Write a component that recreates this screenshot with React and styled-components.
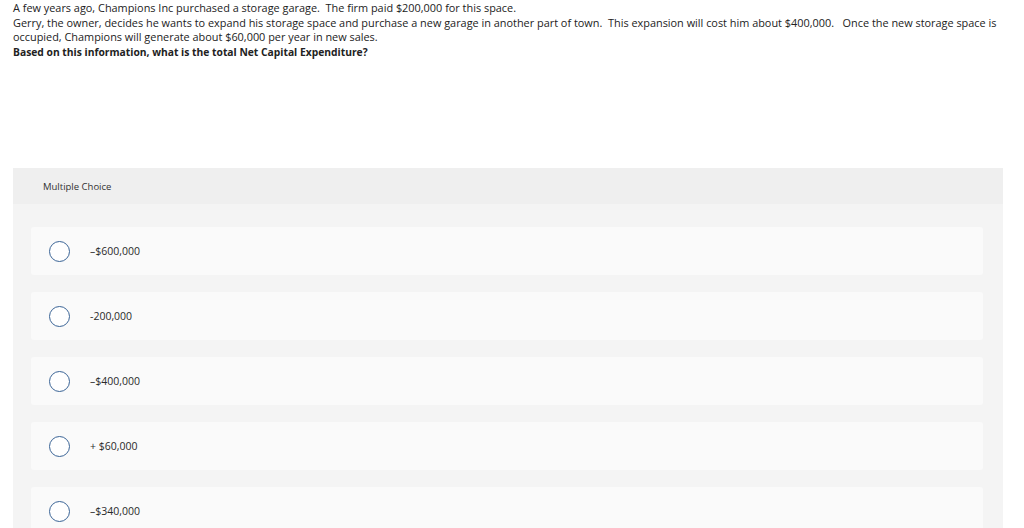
import React from 'react';
import styled, { createGlobalStyle } from 'styled-components';

const GlobalStyle = createGlobalStyle`
	html, body {
		margin: 0;
		padding: 0;
		background: #ffffff;
	}
	body {
		font-family: 'Open Sans', 'Lato', sans-serif;
		color: #1f1f1f;
	}
`;

const Page = styled.div`
	width: 1024px;
	height: 528px;
	overflow: hidden;
	padding: 1px 21px 0 13px;
	box-sizing: border-box;
`;

const Question = styled.div`
	font-size: 10.9px;
	line-height: 14.5px;
	color: #222;
	white-space: pre-wrap;
	max-width: 985px;
`;

const Prompt = styled.div`
	font-size: 10.3px;
	line-height: 14.5px;
	font-weight: 700;
	color: #222;
`;

const Panel = styled.div`
	margin-top: 109px;
	background: #f4f4f4;
	padding-bottom: 20px;
`;

const PanelHeader = styled.div`
	height: 36px;
	background: #efefef;
	display: flex;
	align-items: center;
	padding-left: 30px;
	font-size: 9.5px;
	color: #333;
`;

const Choices = styled.div`
	display: flex;
	flex-direction: column;
	gap: 17px;
	padding: 23px 20px 0 18px;
`;

const Choice = styled.label`
	height: 48px;
	background: #fafafa;
	border-radius: 3px;
	display: flex;
	align-items: center;
	padding-left: 18px;
	font-size: 10.5px;
	color: #2a2a2a;
	cursor: pointer;
`;

const Radio = styled.span`
	width: 19px;
	height: 19px;
	border: 1.2px solid #3a6496;
	border-radius: 50%;
	background: #fff;
	flex-shrink: 0;
	margin-right: 20px;
`;

const options = ['–$600,000', '-200,000', '–$400,000', '+ $60,000', '–$340,000'];

export default function App() {
	return (
		<>
			<GlobalStyle />
			<Page>
				<Question>
					A few years ago, Champions Inc purchased a storage garage.  The firm paid $200,000 for this space.
					<br />
					Gerry, the owner, decides he wants to expand his storage space and purchase a new garage in another part of town.  This expansion will cost him about $400,000.   Once the new storage space is occupied, Champions will generate about $60,000 per year in new sales.
				</Question>
				<Prompt>Based on this information, what is the total Net Capital Expenditure?</Prompt>
				<Panel>
					<PanelHeader>Multiple Choice</PanelHeader>
					<Choices>
						{options.map((o) => (
							<Choice key={o}>
								<Radio />
								{o}
							</Choice>
						))}
					</Choices>
				</Panel>
			</Page>
		</>
	);
}
